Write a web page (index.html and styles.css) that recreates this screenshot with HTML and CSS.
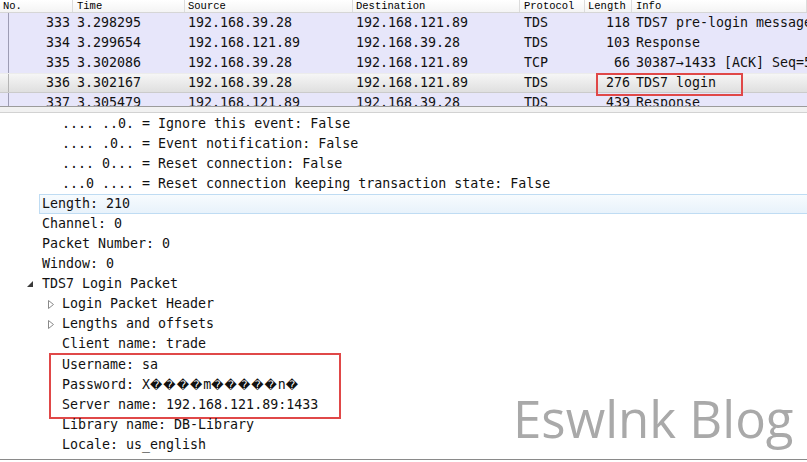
FILE: index.html
```html
<!DOCTYPE html>
<html lang="en">
<head>
    <meta charset="UTF-8">
    <meta name="viewport" content="width=device-width, initial-scale=1.0">
    <link rel="stylesheet" href="styles.css">
    <title>TDS7 login</title>
</head>
<body>
    <div class="packets">
        <div class="row head">
            <span>No.</span><span>Time</span><span>Source</span><span>Destination</span><span>Protocol</span><span>Length</span><span>Info</span>
        </div>
        <div class="row">
            <span class="num">333</span><span>3.298295</span><span>192.168.39.28</span><span>192.168.121.89</span><span>TDS</span><span class="num">118</span><span>TDS7 pre-login message</span>
        </div>
        <div class="row">
            <span class="num">334</span><span>3.299654</span><span>192.168.121.89</span><span>192.168.39.28</span><span>TDS</span><span class="num">103</span><span>Response</span>
        </div>
        <div class="row">
            <span class="num">335</span><span>3.302086</span><span>192.168.39.28</span><span>192.168.121.89</span><span>TCP</span><span class="num">66</span><span>30387→1433 [ACK] Seq=5</span>
        </div>
        <div class="row selected">
            <span class="num">336</span><span>3.302167</span><span>192.168.39.28</span><span>192.168.121.89</span><span>TDS</span><span class="num">276</span><span>TDS7 login</span>
            <div class="mark"></div>
        </div>
        <div class="row">
            <span class="num">337</span><span>3.305479</span><span>192.168.121.89</span><span>192.168.39.28</span><span>TDS</span><span class="num">439</span><span>Response</span>
        </div>
    </div>
    <div class="splitter"></div>

    <div class="details">
        <div class="line lv2">.... ..0. = Ignore this event: False</div>
        <div class="line lv2">.... .0.. = Event notification: False</div>
        <div class="line lv2">.... 0... = Reset connection: False</div>
        <div class="line lv2">...0 .... = Reset connection keeping transaction state: False</div>
        <div class="line lv1 hover">Length: 210</div>
        <div class="line lv1">Channel: 0</div>
        <div class="line lv1">Packet Number: 0</div>
        <div class="line lv1">Window: 0</div>
        <div class="line open">
            <svg class="tw" width="6" height="6" viewBox="0 0 6 6"><path d="M6 0 L6 6 L0 6 Z" fill="#3a3a3a"/></svg>
            TDS7 Login Packet
        </div>
        <div class="line closed">
            <svg class="tw" width="6" height="9" viewBox="0 0 6 9"><path d="M0.5 0.5 L5.5 4.5 L0.5 8.5 Z" fill="none" stroke="#8a8a8a"/></svg>
            Login Packet Header
        </div>
        <div class="line closed">
            <svg class="tw" width="6" height="9" viewBox="0 0 6 9"><path d="M0.5 0.5 L5.5 4.5 L0.5 8.5 Z" fill="none" stroke="#8a8a8a"/></svg>
            Lengths and offsets
        </div>
        <div class="line lv2">Client name: trade</div>
        <div class="creds">
            <div class="line">Username: sa</div>
            <div class="line">Password: X<span class="bad">����</span>m<span class="bad">�����</span>n<span class="bad">�</span></div>
            <div class="line">Server name: 192.168.121.89:1433</div>
        </div>
        <div class="line lv2">Library name: DB-Library</div>
        <div class="line lv2">Locale: us_english</div>
    </div>

    <div class="watermark">Eswlnk Blog</div>
</body>
</html>
```

FILE: styles.css
```css
body{
    margin: 0;
    padding: 0;
    width: 807px;
    height: 462px;
    overflow: hidden;
    position: relative;
    background: #fff;
    font-family: "DejaVu Sans Mono", "Liberation Mono", monospace;
    font-size: 13.3px;
    color: #111;
}

.packets{
    height: 106px;
    overflow: hidden;
    border-bottom: 1px solid #9c9c9c;
}

.row{
    display: grid;
    grid-template-columns: 73px 112px 168px 167px 65px 47px 1fr;
    height: 20px;
    line-height: 20px;
    white-space: nowrap;
    position: relative;
    background:
        linear-gradient(to right, #0000 8px, #9d9cb4 8px, #9d9cb4 9px, #0000 9px),
        #e7e6fa;
}

.row span{
    padding-left: 3px;
    overflow: hidden;
}

.row span.num{
    text-align: right;
    padding: 0 3px 0 0;
}

.row span:nth-child(6).num{
    padding-right: 2px;
}

.row span:nth-child(2){ padding-left: 4px; }
.row span:nth-child(5){ padding-left: 4px; }
.row span:nth-child(7){ padding-left: 4px; }

.head{
    height: 12px;
    line-height: 12px;
    border-bottom: 1px solid #d6d6d6;
    background: linear-gradient(#fff, #f4f4f4);
    font-family: "Liberation Mono", monospace;
    font-size: 10.5px;
    color: #000;
}

.head span{
    border-right: 1px solid #dcdcdc;
}

.head span:nth-child(1){ padding-left: 3px; }
.head span:nth-child(5){ padding-left: 4px; }

.selected{
    z-index: 1;
    background:
        linear-gradient(to right, #0000 8px, #b4b4b4 8px, #b4b4b4 9px, #0000 9px),
        linear-gradient(#f7f7f7, #dedede);
    box-shadow: inset 0 -1px 0 #cbcbcb, inset 0 1px 0 #ececec;
}

.mark{
    position: absolute;
    left: 596px;
    top: 0;
    width: 143px;
    height: 19px;
    border: 2px solid #e04848;
}

.splitter{
    height: 5px;
    background: #f1f1f1;
    border-bottom: 1px solid #d2d2d2;
}

.details{
    height: 345px;
    padding-top: 1px;
    border-bottom: 1px solid #8a8a8a;
}

.line{
    height: 20px;
    line-height: 20px;
    white-space: nowrap;
    display: flex;
    align-items: center;
}

.lv1{ padding-left: 42px; }
.lv2{ padding-left: 62px; }

.hover{
    margin-left: 39px;
    padding-left: 2px;
    height: 18px;
    border: 1px solid #bfdcf3;
    border-right: none;
    background: linear-gradient(#f7fbfe, #e8f2fb);
}

.open{ padding-left: 27px; }
.open .tw{ margin-right: 9px; }

.closed{ padding-left: 48px; }
.closed .tw{ margin-right: 8px; }

.creds{
    margin: -1px 0 -4px 49px;
    width: 277px;
    border: 2px solid #e04848;
    padding: 0 0 2px 11px;
}

.bad{
    font-family: "DejaVu Sans", sans-serif;
    font-size: 12px;
    letter-spacing: 1px;
}

.watermark{
    position: absolute;
    left: 513px;
    top: 383px;
    font-family: "Open Sans", sans-serif;
    font-size: 51px;
    color: #a9a9a9;
}
```
